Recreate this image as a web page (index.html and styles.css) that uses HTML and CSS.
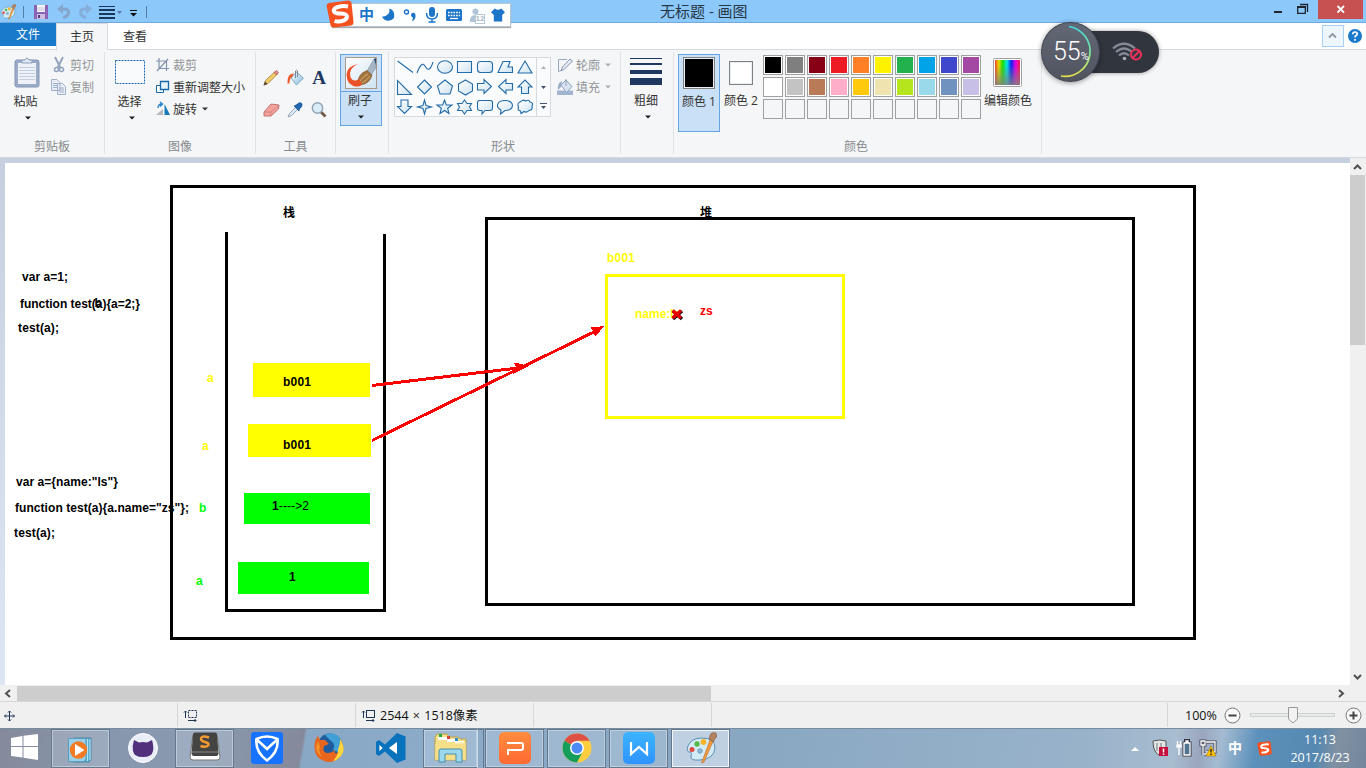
FILE: index.html
```html
<!DOCTYPE html>
<html lang="zh-CN">
<head>
<meta charset="utf-8">
<title>无标题 - 画图</title>
<link rel="stylesheet" href="styles.css">
</head>
<body>
<svg class="defs" width="0" height="0">
  <defs>
    <symbol id="down" viewBox="0 0 6 4"><path d="M0 0.5H6L3 3.5Z" fill="currentColor"/></symbol>
    <symbol id="sogou" viewBox="0 0 28 28">
      <path d="M3 3L22 .5Q25 .5 25.500 3L27.500 22Q27.500 25 25 25.500L8 27.500Q5 27.500 4.500 25L.6 6Q.5 3.500 3 3Z" fill="#f4511e"/>
      <path d="M22 6.500Q17 5.500 12 7Q7 8.500 8 11.500Q9 13.500 14 13.500Q20.500 13.500 21 16.500Q21 20 15 21.200Q11 22 8.500 21" fill="none" stroke="#fff" stroke-width="4"/>
    </symbol>
    <symbol id="palette" viewBox="0 0 32 32">
      <path d="M3 14Q6 6 17 6Q30 6 30 16Q29 27 15 28Q5 29 6 24Q8 20 4 20Q1 19 3 14Z" fill="#d3eaf7" stroke="#5b8fb0"/>
      <circle cx="7" cy="17.500" r="2.500" fill="#e0483e"/><circle cx="12" cy="12" r="2.700" fill="#57b947"/><circle cx="18.500" cy="10" r="2.900" fill="#f5b52a"/><circle cx="15" cy="19" r="2.300" fill="#8fb8d4" stroke="#5b8fb0" stroke-width=".7"/>
      <path d="M25 8L28 9.500L19 30L16.500 31Z" fill="#f39a3b" stroke="#b96b28" stroke-width=".6"/>
      <path d="M24 7L25.500 2Q30 -1 32 2.500Q33 5 29.500 7L28.500 10Z" fill="#b48460" stroke="#7c583d" stroke-width=".6"/>
    </symbol>
    <linearGradient id="ice" x1="0" y1="0" x2="1" y2="1"><stop offset="0" stop-color="#fff"/><stop offset="1" stop-color="#cfe3f2"/></linearGradient>
    <linearGradient id="pour" x1="0" y1="0" x2="1" y2="1"><stop offset="0" stop-color="#fff"/><stop offset="1" stop-color="#7fb9dc"/></linearGradient>
    <linearGradient id="hue"><stop offset="0" stop-color="#f04020"/><stop offset=".15" stop-color="#e8d800"/><stop offset=".3" stop-color="#20e000"/><stop offset=".48" stop-color="#00e8e8"/><stop offset=".65" stop-color="#1020f0"/><stop offset=".83" stop-color="#f000e0"/><stop offset="1" stop-color="#f02040"/></linearGradient>
    <linearGradient id="fade" x1="0" y1="0" x2="0" y2="1"><stop offset=".2" stop-color="#808080" stop-opacity="0"/><stop offset="1" stop-color="#808080" stop-opacity=".85"/></linearGradient>
    <linearGradient id="ring" x1="0" y1="0" x2="0" y2="1"><stop offset="0" stop-color="#45d6e0"/><stop offset=".5" stop-color="#78e8a0"/><stop offset="1" stop-color="#e8e04a"/></linearGradient>
    <linearGradient id="orange-tile" x1="0" y1="0" x2="0" y2="1"><stop offset="0" stop-color="#ff8c3e"/><stop offset="1" stop-color="#ff6a32"/></linearGradient>
    <linearGradient id="blue-tile" x1="0" y1="0" x2="0" y2="1"><stop offset="0" stop-color="#3cb4ff"/><stop offset="1" stop-color="#2f93ff"/></linearGradient>
  </defs>
</svg>

<header class="titlebar">
  <div class="quick">
    <svg class="app-icon" width="16" height="16"><use href="#palette"/></svg>
    <i class="tick"></i>
    <svg class="save" width="14" height="14" viewBox="0 0 14 14"><path d="M0 0H14V14H0Z" fill="#8a63b5"/><path d="M3 0H11V7H3Z" fill="#f5f5fa"/><path d="M3 3H11M3 5H11" stroke="#c9c4d8"/><path d="M3 9H11V14H3Z" fill="#cbbce0"/><path d="M4 10H6V13H4Z" fill="#5b3d86"/></svg>
    <svg class="undo" width="14" height="15" viewBox="0 0 14 15"><path d="M3 5H7.500Q12 5 11.500 9Q11 12.500 6 13.500" fill="none" stroke="#85a5cc" stroke-width="3"/><path d="M6 0V10L0 5Z" fill="#85a5cc"/></svg>
    <svg class="redo" width="14" height="15" viewBox="0 0 14 15"><path d="M11 5H6.500Q2 5 2.500 9Q3 12.500 8 13.500" fill="none" stroke="#85addb" stroke-width="3"/><path d="M8 0V10L14 5Z" fill="#85addb"/></svg>
    <svg class="lines-small" width="24" height="14" viewBox="0 0 24 14"><path d="M0 1H16V2H0ZM0 4H16V6H0ZM0 8H16V10H0ZM0 12H16V14H0Z" fill="#1b365d"/><path d="M18 6H23L20.500 9Z" fill="#5676a5"/></svg>
    <svg class="more" width="7" height="7" viewBox="0 0 7 7"><path d="M0 .5H7" stroke="#111"/><path d="M0 3H7L3.500 6.500Z" fill="#111"/></svg>
    <i class="tick last"></i>
  </div>
  <h1>无标题 - 画图</h1>
  <div class="window-buttons">
    <svg width="32" height="19"><path d="M12 11H20V13H12Z" fill="#1c2530"/></svg>
    <svg class="restore" width="24" height="19"><path d="M3.700 6.700H11.300V13.300H3.700ZM6 4.500H13.500V12" fill="none" stroke="#1c2530" stroke-width="1.300"/><path d="M3 6H12V8H3Z" fill="#1c2530"/></svg>
    <svg class="close" width="45" height="19"><path d="M19.500 6L26 12.500M26 6L19.500 12.500" stroke="#fff" stroke-width="1.800"/></svg>
  </div>
</header>

<nav class="tabs">
  <span class="tab file">文件</span>
  <span class="tab active">主页</span>
  <span class="tab">查看</span>
  <span class="tab-right">
    <svg class="collapse" width="22" height="22"><path d="M7 12.500L10.500 9L14 12.500" fill="none" stroke="#8f969e" stroke-width="1.800"/></svg>
    <svg width="14" height="14" viewBox="0 0 14 14"><circle cx="7" cy="7" r="7" fill="#1979ca"/><path d="M4.800 5.300Q4.800 3 7 3T9.200 5Q9.200 6 7.800 6.800Q7 7.300 7 8.500M7 10V11.800" fill="none" stroke="#fff" stroke-width="1.700"/></svg>
  </span>
</nav>

<section class="ribbon">
  <div class="group g-clip">
    <div class="body">
      <div class="big">
        <svg class="pic" width="26" height="31" viewBox="0 0 26 31"><rect x="1" y="3" width="24" height="27" rx="2" fill="#9aabc8" stroke="#8496b5"/><path d="M4 6H22V27H4Z" fill="#eef2f8"/><path d="M5 10.500H21M5 13.500H21M5 16.500H21M5 19.500H21M5 22.500H21" stroke="#c3cede"/><path d="M8 6V3H11Q13 -1 15 3H18V6Z" fill="#dfe6f1" stroke="#8da0be"/></svg>
        <span>粘贴</span><svg class="arr" width="6" height="4"><use href="#down"/></svg>
      </div>
      <div class="rows muted">
        <div class="row"><svg width="16" height="16" viewBox="0 0 16 16"><path d="M4 0L9.500 11M12 0L6.500 11" stroke="#94a4c0" stroke-width="1.900"/><circle cx="5.500" cy="12.500" r="2" fill="none" stroke="#94a4c0" stroke-width="1.500"/><circle cx="10.500" cy="12.500" r="2" fill="none" stroke="#94a4c0" stroke-width="1.500"/></svg><span>剪切</span></div>
        <div class="row"><svg width="16" height="16" viewBox="0 0 16 16"><path d="M.5 .5H6L9 3.500V11.500H.5ZM6.500 4.500H11.500L14.500 7.500V15.500H6.500Z" fill="#e9eef6" stroke="#a2b1cb"/><path d="M2 4.500H6M2 6.500H6M2 8.500H6M8 9H13M8 11H13M8 13H13" stroke="#a2b1cb"/></svg><span>复制</span></div>
      </div>
    </div>
    <div class="label">剪贴板</div>
  </div>

  <div class="group g-image">
    <div class="body">
      <div class="big">
        <svg class="pic" width="30" height="31"><rect x=".5" y="3.500" width="29" height="23" fill="#f9fafc" stroke="#1769ae" stroke-dasharray="2 1"/></svg>
        <span>选择</span><svg class="arr" width="6" height="4"><use href="#down"/></svg>
      </div>
      <div class="rows">
        <div class="row muted"><svg width="14" height="14" viewBox="0 0 14 14"><path d="M3 0V10.500H13M0 3H10.500V13M1 13L12 1" fill="none" stroke="#8393ad" stroke-width="1.200"/></svg><span>裁剪</span></div>
        <div class="row"><svg width="14" height="14" viewBox="0 0 14 14"><path d="M.5 5.500H7.500V12.500H.5Z" fill="#fff" stroke="#1769ae"/><path d="M4.500 1.500H12.500V9.500H4.500Z" fill="#e7f1fa" stroke="#1769ae" stroke-width="1.300"/></svg><span>重新调整大小</span></div>
        <div class="row"><svg width="14" height="14" viewBox="0 0 14 14"><path d="M0 13H7V7Z" fill="#b4b8bd"/><path d="M8.500 13V2L14 13Z" fill="#197aba"/><path d="M2 6Q2 2 6 2M4 0L6.500 2L4 4.500" fill="none" stroke="#2482d0" stroke-width="1.300"/></svg><span>旋转</span><svg class="arr-inline" width="6" height="4"><use href="#down"/></svg></div>
      </div>
    </div>
    <div class="label">图像</div>
  </div>

  <div class="group g-tools">
    <div class="body tools">
      <svg width="16" height="16" viewBox="0 0 16 16"><path d="M1 15L2.500 10.500L11.500 2L14 4.500L5 13.500Z" fill="#f1cb68" stroke="#a07a3e" stroke-width=".8"/><path d="M11 2.500L13.500 .5L15.500 2.500L13.500 5Z" fill="#e58686" stroke="#a65a52" stroke-width=".7"/><path d="M.5 15.500L2 11.500L4.500 14Z" fill="#514638"/></svg>
      <svg width="17" height="16" viewBox="0 0 17 16"><path d="M4 8L9.500 2L16.500 8L9.500 15Z" fill="url(#pour)" stroke="#6d9abb" stroke-width=".8"/><path d="M8.500 8V1Q9.500 -.5 10.500 1V7" stroke="#6c7a88" stroke-width=".9" fill="none"/><path d="M7 3.500Q0 3 .5 13.500H2.500Q2.500 8 5 7Z" fill="#ed5b2c"/></svg>
      <span class="letter">A</span>
      <svg width="17" height="14" viewBox="0 0 17 14"><path d="M1 9L8 1L16 2L15.500 6L8 13H1Z" fill="#f2a39d" stroke="#bd6963" stroke-width=".9"/><path d="M1 9H8L16 2M8 9V13" fill="none" stroke="#cf7b75" stroke-width=".8"/></svg>
      <svg width="16" height="16" viewBox="0 0 16 16"><path d="M1 15L2.500 11.500L9 5L11 7L4.500 13.500Z" fill="#d8e9f7" stroke="#8294a8" stroke-width=".8"/><path d="M7 4L9 3L12 .8Q15 0 15.200 3Q15 5 12.500 7L12 9Z" fill="#1d65ae" stroke="#174d84" stroke-width=".6"/></svg>
      <svg width="16" height="16" viewBox="0 0 16 16"><path d="M9.500 9.500L14.500 14.500" stroke="#725846" stroke-width="2.800"/><circle cx="6.500" cy="6" r="5.200" fill="#d9edf9" stroke="#91a3b3" stroke-width="1.400"/></svg>
    </div>
    <div class="label">工具</div>
  </div>

  <div class="group g-brush">
    <div class="brush-btn">
      <div class="brush-top"><svg width="32" height="32" viewBox="0 0 32 32"><rect x=".5" y=".5" width="31" height="31" fill="url(#ice)" stroke="#a99b8c"/><path d="M13 7Q2 9 1.500 18Q2 29 12 29.500Q16 30 17 26L14 22Q8 26 5.500 20Q3 11 13 7Z" fill="#ed5129"/><path d="M22 14L29 2H31V11L26 18Z" fill="#a8b5c4" stroke="#6f7f91" stroke-width=".5"/><path d="M29 2L31 1V8Z" fill="#304b70"/><path d="M13 25Q13 17 22 13.500L27 18Q25 27 15 28Z" fill="#a4743e" stroke="#74502e" stroke-width=".6"/><path d="M15 24Q18 19 23 17M17 26Q22 23 25 19" stroke="#d9ae72" fill="none"/><path d="M9 29L14 22L17 27Q14 30 9 29Z" fill="#ed5129"/></svg></div>
      <span>刷子</span><svg class="arr" width="6" height="4"><use href="#down"/></svg>
    </div>
  </div>

  <div class="group g-shapes">
    <div class="body">
      <svg class="gallery" width="157" height="60" viewBox="0 0 157 60">
        <path d="M.5 .5H156.500V59.500H.5ZM142.500 .5V59.500" fill="#fafbfc" stroke="#d6d9dd"/>
        <g fill="url(#ice)" stroke="#236ca8" stroke-width="1.100">
          <path d="M3.500 4L19 15.500"/>
          <path d="M23 16C26 8 29 5 31 9S36 15 39 5" fill="none"/>
          <ellipse cx="51" cy="10" rx="7.500" ry="6.200"/>
          <path d="M63.500 4.500H77.500V15.500H63.500Z"/>
          <rect x="83.500" y="4.500" width="15" height="11" rx="3"/>
          <path d="M104 15.500L109 4.500H116L114 10H118.500V15.500Z"/>
          <path d="M131 4L138 16H124Z"/>
          <path d="M3.500 23.500V37.500H17.500Z"/>
          <path d="M30.500 23L37.500 30L30.500 37L23.500 30Z"/>
          <path d="M51 23L58.500 29L56 37H46L43.500 29Z"/>
          <path d="M71.500 23L78.500 27V34L71.500 38L64.500 34V27Z"/>
          <path d="M83.500 26.500H90V22.500L97.500 29.500L90 36.500V33H83.500Z"/>
          <path d="M118.500 26.500H112V22.500L104.500 29.500L112 36.500V33H118.500Z"/>
          <path d="M127.500 36.500V30H124L131 23L138 30H134.500V36.500Z"/>
          <path d="M7 43V49.500H3.500L10.500 56.500L17.500 49.500H14V43Z"/>
          <path d="M30.500 43L32 48.500L37.500 50L32 51.500L30.500 57L29 51.500L23.500 50L29 48.500Z"/>
          <path d="M50.500 43L52.300 48H58L53.700 51.300L55 56.500L50.500 53.500L46 56.500L47.300 51.300L43 48H48.700Z"/>
          <path d="M70.500 43L73 46.500H77.500L75.500 50L77.500 53.500H73L70.500 57L68 53.500H63.500L65.500 50L63.500 46.500H68Z"/>
          <path d="M85.500 43.500H96.500Q98.500 43.500 98.500 46V51Q98.500 53.500 96 53.500H91L88 57V53.500H85.500Q83.500 53.500 83.500 51V46Q83.500 43.500 85.500 43.500Z"/>
          <path d="M107 53C101 50 103 43.500 111 43.500C121 43.500 121 53.500 111 53.500L106.500 57Z"/>
          <path d="M127 44.500Q129 42 131.500 44Q135 42 136 45Q140 46 138 49Q139 53 135 53.500Q133 56 130 54.500L127 56.500L126.500 54Q123 53.500 124.500 50Q122.500 46 127 44.500Z"/>
        </g>
        <path d="M147 12L149.500 9L152 12Z" fill="#a9afb8"/><path d="M147 29H152L149.500 32ZM147 49H152L149.500 52Z" fill="#42536b"/><path d="M146 46.500H153" stroke="#42536b"/>
      </svg>
      <div class="rows muted">
        <div class="row"><svg width="16" height="16" viewBox="0 0 16 16"><path d="M10 2.500H1.500V14.500L5 13" fill="none" stroke="#98a7bf"/><path d="M4 14L5.500 10L13 2L15.500 4L7.500 12Z" fill="#e6edf6" stroke="#8496b2"/></svg><span>轮廓</span><svg class="arr-inline" width="6" height="4"><use href="#down"/></svg></div>
        <div class="row"><svg width="16" height="16" viewBox="0 0 16 16"><path d="M0 11.500H16V16H0Z" fill="#a2b4cf"/><path d="M4 6L9 1L15 7.500L9.500 13.500Z" fill="#d9e3f0" stroke="#8fa2c0"/><path d="M9 0V7" stroke="#8fa2c0"/><path d="M5 2Q0 4 1 11L4 8Z" fill="#9daec9"/></svg><span>填充</span><svg class="arr-inline" width="6" height="4"><use href="#down"/></svg></div>
      </div>
    </div>
    <div class="label">形状</div>
  </div>

  <div class="group g-size">
    <div class="big">
      <svg class="pic" width="32" height="31"><path d="M0 2H32V3H0ZM0 7H32V9H0ZM0 14H32V18H0ZM0 22H32V29H0Z" fill="#1f3860"/></svg>
      <span>粗细</span><svg class="arr" width="6" height="4"><use href="#down"/></svg>
    </div>
  </div>

  <div class="group g-colors">
    <div class="body">
      <div class="color-btn on"><i class="chip black"></i><span>颜色 1</span></div>
      <div class="color-btn"><i class="chip white small"></i><span>颜色 2</span></div>
      <div class="palette">
        <i class="black"></i><i class="gray"></i><i class="maroon"></i><i class="red"></i><i class="orange"></i><i class="yellow"></i><i class="green"></i><i class="azure"></i><i class="indigo"></i><i class="purple"></i>
        <i class="white"></i><i class="silver"></i><i class="brown"></i><i class="pink"></i><i class="gold"></i><i class="cream"></i><i class="lime"></i><i class="sky"></i><i class="steel"></i><i class="lavender"></i>
        <i></i><i></i><i></i><i></i><i></i><i></i><i></i><i></i><i></i><i></i>
      </div>
      <div class="edit"><svg width="29" height="29" viewBox="0 0 29 29"><rect x=".5" y=".5" width="28" height="28" rx="1" fill="#fff" stroke="#a0a0a0"/><path d="M2 2H27V27H2Z" fill="url(#hue)"/><path d="M2 2H27V27H2Z" fill="url(#fade)"/></svg><span>编辑颜色</span></div>
    </div>
    <div class="label">颜色</div>
  </div>
</section>

<main class="workspace">
  <svg class="canvas" width="1345" height="522" viewBox="5 163 1345 522">
    <g fill="none" stroke="#000" stroke-width="3" shape-rendering="crispEdges">
      <rect x="171.500" y="186.500" width="1023" height="452"/>
      <rect x="486.500" y="218.500" width="647" height="386"/>
      <path d="M226.500 232V610.500H384.500V234"/>
      <rect x="606.500" y="275.500" width="237" height="142" stroke="#ff0"/>
    </g>
    <g shape-rendering="crispEdges">
      <path d="M253 363H370V397H253ZM248 424H371V457H248Z" fill="#ff0"/>
      <path d="M244 493H370V524H244ZM238 562H369V594H238Z" fill="#0f0"/>
    </g>
    <g fill="#f00" stroke="#f00" shape-rendering="crispEdges">
      <path d="M372 385.500L518 368M372 440.500L596 331" stroke-width="3"/>
      <path d="M527 366L515 363.500L517 368L515 372ZM602.500 327L592 328L594 331L595.500 335Z" stroke-width="1.500"/>
    </g>
    <g class="ink">
      <text x="22" y="281" textLength="46">var a=1;</text>
      <text x="20" y="308" textLength="120">function test(a){a=2;}</text>
      <text x="94.500" y="307">b</text>
      <text x="18" y="332" textLength="41">test(a);</text>
      <text x="16" y="486" textLength="102">var a={name:"ls"}</text>
      <text x="15" y="512" textLength="174">function test(a){a.name="zs"};</text>
      <text x="14" y="537" textLength="41">test(a);</text>
      <text x="283" y="386" textLength="28">b001</text>
      <text x="283" y="449" textLength="28">b001</text>
      <text x="272" y="510" textLength="37">1<tspan class="plain">----&gt;2</tspan></text>
      <text x="289" y="581">1</text>
      <text class="cjk" x="283" y="217">栈</text>
      <text class="cjk" x="700" y="217">堆</text>
      <g fill="#ff0"><text x="207" y="382">a</text><text x="202" y="450">a</text><text x="607" y="262" textLength="28">b001</text><text x="635" y="318">name:ls</text></g>
      <g fill="#0f0"><text x="199" y="512">b</text><text x="196" y="585">a</text></g>
      <text x="700" y="315" fill="#f00">zs</text>
    </g>
    <path d="M673 311L682 319M682 311L673 319" stroke="#101820" stroke-width="3.500"/>
    <path d="M672.500 310.500L681 318M681 310.500L672.500 318" stroke="#e80000" stroke-width="3.200"/>
  </svg>
  <div class="vscroll">
    <svg width="15" height="17"><path d="M4 11L7.500 7.500L11 11" fill="none" stroke="#505050" stroke-width="2"/></svg>
    <i class="thumb"></i>
    <svg class="bottom" width="15" height="17"><path d="M4 7L7.500 10.500L11 7" fill="none" stroke="#505050" stroke-width="2"/></svg>
  </div>
</main>
<div class="hscroll">
  <svg width="17" height="15"><path d="M10 4L6 7.500L10 11" fill="none" stroke="#505050" stroke-width="2"/></svg>
  <i class="thumb"></i>
  <svg class="end" width="17" height="15"><path d="M7 4L11 7.500L7 11" fill="none" stroke="#505050" stroke-width="2"/></svg>
</div>

<footer class="status">
  <div class="cell first"><svg width="12" height="12" viewBox="0 0 12 12"><path d="M6.500 1V11M1.500 6H11.500M5 2.500L6.500 1L8 2.500M5 9.500L6.500 11L8 9.500M3 4.500L1.500 6L3 7.500M10 4.500L11.500 6L10 7.500" fill="none" stroke="#1f3554"/></svg></div>
  <div class="cell"><svg width="14" height="12" viewBox="0 0 14 12"><path d="M1.500 8V1M0 2.500L1.500 1L3 2.500M4 10.500H12M10.500 9L12 10.500L10.500 12" fill="none" stroke="#1f3554"/><rect x="4.500" y=".5" width="8" height="7" fill="none" stroke="#1f3554" stroke-dasharray="2 1"/></svg></div>
  <div class="cell"><svg width="14" height="12" viewBox="0 0 14 12"><path d="M1.500 8V1M0 2.500L1.500 1L3 2.500M4 10.500H12M10.500 9L12 10.500L10.500 12" fill="none" stroke="#1f3554"/><rect x="4.500" y=".5" width="8" height="7" fill="none" stroke="#1f3554"/></svg><span class="dims">2544 × 1518像素</span></div>
  <div class="cell"></div>
  <div class="cell wide"></div>
  <div class="zoom">
    <span>100%</span>
    <svg width="17" height="17" viewBox="0 0 17 17"><circle cx="8.500" cy="8.500" r="7.500" fill="#f8f8f8" stroke="#777"/><path d="M4.500 8.500H12.500" stroke="#444" stroke-width="2"/></svg>
    <svg class="slider" width="85" height="17" viewBox="0 0 85 17"><rect x=".5" y="6.500" width="84" height="3" fill="#e7eaea" stroke="#ced2d2"/><path d="M38.500 .5H47.500V12L43 16L38.500 12Z" fill="#f2f2f2" stroke="#999"/></svg>
    <svg width="17" height="17" viewBox="0 0 17 17"><circle cx="8.500" cy="8.500" r="7.500" fill="#f8f8f8" stroke="#777"/><path d="M4.500 8.500H12.500M8.500 4.500V12.500" stroke="#444" stroke-width="2"/></svg>
  </div>
</footer>

<div class="taskbar">
  <div class="start"><svg width="28" height="26" viewBox="0 0 28 26"><path d="M0 4L11.500 2V12H0ZM12.500 1.800L27 0V12H12.500ZM0 13H11.500V23.500L0 22ZM12.500 13H27V26L12.500 23.800Z" fill="#fff"/></svg></div>
  <div class="task open"><svg class="media" width="28" height="26" viewBox="0 0 28 26"><path d="M7 1H24V22L22 25H6Z" fill="#5baed1" stroke="#377e9f" stroke-width=".8"/><path d="M1.500 1.500H19V22L17 24.500H1.500Z" fill="#9bd0e8" stroke="#559cbd"/><path d="M20.500 2V24M23 2V23" stroke="#b9e4f5"/><circle cx="11.500" cy="13" r="8.700" fill="#f17a22"/><path d="M8 7L17.500 13L8 19Z" fill="#fff"/></svg></div>
  <div class="task"><svg width="30" height="30" viewBox="0 0 30 30"><circle cx="15" cy="15" r="14.500" fill="#e9edf8" stroke="#fff"/><path d="M6 7L11 9.500Q15 8.500 19 9.500L24 7Q26 14 25 18Q24 24 15 24Q6 24 5 18Q4 13 6 7Z" fill="#52307c"/></svg></div>
  <div class="task open"><svg class="raised" width="32" height="30" viewBox="0 0 32 30"><path d="M4 3L1 25Q1 28 4 28H28Q31 28 31 25L28 3Z" fill="#fff" stroke="#777"/><path d="M6 .5H26Q28 .5 28 2.500L29.500 21Q29.500 24 27 24H5Q2.500 24 2.500 21L4 2.500Q4 .5 6 .5Z" fill="#444442"/><path d="M3 20H29" stroke="#888"/><path d="M20 5.500Q12 3 12 7Q12 9 16 10Q20 11 19.500 13Q18 16 11.500 14" fill="none" stroke="#f39b32" stroke-width="2.500"/></svg></div>
  <div class="task"><svg width="32" height="32" viewBox="0 0 32 32"><rect width="32" height="32" rx="3" fill="#1672ff"/><path d="M5.500 7Q16 2 26.500 7Q28 20 16 28.500Q4 20 5.500 7ZM6 8Q11 12 16 17Q21 12 26 8" fill="none" stroke="#fff" stroke-width="2.600"/></svg></div>
  <div class="task"><svg width="32" height="32" viewBox="0 0 32 32"><circle cx="17" cy="14" r="12.500" fill="#1e5c9e"/><path d="M12 3Q20 -1 27 6Q32 15 27 21L20 18Q23 12 18 9Z" fill="#3f9fd6"/><path d="M27 7Q34 18 26 26Q19 32 11 29Q2 26 1.500 16Q1 8 5 4L7 8L12 8L16 12L11 14Q9 20 14 21Q19 21 22 18Q21 23 24 21Q28 17 27 7Z" fill="#e8651d"/><path d="M27 7Q34 18 27 25Q24 28 20 29Q26 22 25 17Q27 14 27 7Z" fill="#ffd63c"/><path d="M5 9Q0 19 9 25Q5 19 7 14Z" fill="#f39227"/></svg></div>
  <div class="task"><svg width="30" height="30" viewBox="0 0 30 30"><path d="M21 0L29.500 3.500V26.500L21 30L9 18.500L3 23L0 21V9L3 7L9 11.500ZM21 9L13 15L21 21ZM3.500 12V18L6.500 15Z" fill="#0873bd" fill-rule="evenodd"/><path d="M21 9L13 15L21 21ZM3.500 12V18L6.500 15Z" fill="#fff"/></svg></div>
  <div class="task stacked"><svg width="34" height="30" viewBox="0 0 34 30"><path d="M3 1H13L15 4H24L26 6H32V27H1V4Z" fill="#f3df87" stroke="#b99f4a"/><path d="M4 4H13V7H4ZM13 6H22V9H13ZM21 8H30V11H21Z" fill="#fff"/><path d="M5 1H8V4H5Z" fill="#22a944"/><path d="M13 3H16V6H13Z" fill="#d44434"/><path d="M21 5H24V8H21Z" fill="#2e8bd0"/><path d="M1 11L32 9V27H1Z" fill="#f6e089" opacity=".75"/><path d="M5 18Q5 16 7 16H26Q28 16 28 18V29H22V21H11V29H5Z" fill="#9bd8ed" stroke="#478eac"/></svg></div>
  <div class="task open"><svg width="32" height="32" viewBox="0 0 32 32"><rect width="32" height="32" rx="5" fill="url(#orange-tile)"/><path d="M8 11H22Q24 11 24 13V16Q24 18 22 18H9V23" fill="none" stroke="#fff" stroke-width="2"/></svg></div>
  <div class="task open"><svg width="30" height="30" viewBox="0 0 30 30"><circle cx="15" cy="15" r="14.500" fill="#ffcd40"/><path d="M15 15L2.400 7.800A14.500 14.500 0 0 1 27.600 7.800H15Z" fill="#dd5144"/><path d="M15 15L2.400 7.800A14.500 14.500 0 0 0 15 29.500L21 18Z" fill="#159d5b"/><circle cx="15" cy="15" r="7" fill="#fff"/><circle cx="15" cy="15" r="5.500" fill="#4c8bf5"/></svg></div>
  <div class="task open"><svg width="32" height="32" viewBox="0 0 32 32"><rect width="32" height="32" rx="5" fill="url(#blue-tile)"/><path d="M8 10V22L16 15L24 22V10" fill="none" stroke="#fff" stroke-width="2.200"/></svg></div>
  <div class="task open current"><svg width="32" height="32"><use href="#palette"/></svg></div>
  <div class="tray">
    <svg width="8" height="4" viewBox="0 0 8 4"><path d="M0 4L4 0L8 4Z" fill="#fff"/></svg>
    <svg width="16" height="17" viewBox="0 0 16 17"><path d="M1 1Q8 -1 14 1V8Q12 14 7 15Q1 12 1 1Z" fill="#e2e4e5" stroke="#555"/><path d="M5 3V11M9 3V8" stroke="#777"/><rect x="7" y="7" width="9" height="9" fill="#c40f3c"/><path d="M11.500 8.500V12.500M11.500 13.500V15" stroke="#fff" stroke-width="1.500"/></svg>
    <svg width="16" height="17" viewBox="0 0 16 17"><path d="M8 3H14V15H8ZM9.500 .5H12.500V2.500H9.500Z" fill="none" stroke="#334" stroke-width="3"/><path d="M8 3H14V15H8ZM10 1H12V2H10Z" fill="#51748f" stroke="#fff" stroke-width="1.300"/><path d="M1.500 1V4M4.500 1V4M1 5H5V7H1ZM3 8V15" fill="#fff" stroke="#fff" stroke-width="1.300"/></svg>
    <svg width="16" height="17" viewBox="0 0 16 17"><path d="M6 2H15V12H6M4 14H9M1 1H5V5H1ZM3 5V15" fill="none" stroke="#445" stroke-width="3"/><path d="M6 2H15V12H6M4 14H9M1 1H5V5H1ZM3 5V15" fill="none" stroke="#fff" stroke-width="1.300"/><path d="M11 6L16 16H6Z" fill="#ffc300" stroke="#946c00" stroke-width=".5"/><path d="M11 9V12.500M11 13.500V15" stroke="#222" stroke-width="1.400"/></svg>
    <span class="ime">中</span>
    <svg width="15" height="15"><use href="#sogou"/></svg>
    <div class="clock"><span>11:13</span><span>2017/8/23</span></div>
  </div>
</div>

<div class="sogou-bar">
  <svg class="sogou-logo" width="28" height="28"><use href="#sogou"/></svg>
  <span class="cn">中</span>
  <svg width="14" height="14" viewBox="0 0 15 14"><path d="M8 0Q9 8 0 9Q3 14 8 13Q14 12 13 6Q12 1 8 0Z" fill="#1c75c9"/></svg>
  <svg width="14" height="14" viewBox="0 0 14 14"><circle cx="3.500" cy="4" r="2" fill="none" stroke="#1c75c9" stroke-width="1.400"/><path d="M9 5Q12 4 12.500 7Q13 11 9.500 13L9 12Q11 10 9 9Q7 7 9 5Z" fill="#1c75c9"/></svg>
  <svg width="14" height="16" viewBox="0 0 14 16"><rect x="4" y="0" width="6" height="10" rx="3" fill="#1c75c9"/><path d="M1.500 6Q1.500 12 7 12T12.500 6M7 12V15M3.500 15H10.500" fill="none" stroke="#1c75c9" stroke-width="1.500"/></svg>
  <svg width="16" height="12" viewBox="0 0 16 12"><rect width="16" height="12" rx="1.500" fill="#1c75c9"/><path d="M2 3.500H14M2 6.500H14" stroke="#fff" stroke-width="1.500" stroke-dasharray="1.700 1"/><path d="M4 9.500H12" stroke="#fff" stroke-width="1.300"/></svg>
  <span class="person"><svg width="11" height="15" viewBox="0 0 11 15"><circle cx="5.500" cy="3.500" r="3" fill="#b1c3d6"/><path d="M0 14Q-.5 7 5.500 7T11 14Z" fill="#b1c3d6"/></svg><b>12</b></span>
  <svg width="14" height="14" viewBox="0 0 15 14"><path d="M4 0Q7.500 3 11 0L15 4L12 7V14H3V7L0 4Z" fill="#1c75c9"/></svg>
</div>

<div class="meter">
  <div class="pill"><svg width="32" height="20" viewBox="0 0 32 20"><path d="M1 6.500Q12 -3 23 6.500M4 10Q12 3 20 10M7 13.500Q12 9 17 13.500" fill="none" stroke="#858a96" stroke-width="2.300"/><circle cx="12.500" cy="16.500" r="1.800" fill="#a9adb6"/><circle cx="24" cy="12.500" r="5" fill="#343842" stroke="#ec3157" stroke-width="2"/><path d="M20.500 16L27.500 9" stroke="#ec3157" stroke-width="2"/></svg></div>
  <div class="dial"><svg width="59" height="59" viewBox="0 0 59 59"><path d="M30 4.500A25 25 0 1 1 22 54" fill="none" stroke="url(#ring)" stroke-width="1.700"/></svg><span>55<small>%</small></span></div>
</div>
</body>
</html>
```

FILE: styles.css
```css
* { box-sizing: border-box; }
body { margin: 0; width: 1366px; height: 768px; overflow: hidden; display: flex; flex-direction: column; position: relative; background: #fff; color: #333; font: 12px/16px "Open Sans", "Noto Sans CJK SC", sans-serif; }
svg { display: block; flex: none; overflow: visible; }
span { white-space: nowrap; }
.defs { position: absolute; }

.titlebar { height: 23px; flex: none; display: flex; background: #8cc8fa; border-bottom: 1px solid #70a9df; }
.quick { display: flex; align-items: center; width: 200px; height: 22px; padding-top: 1px; }
.tick { width: 1px; height: 12px; background: #527da6; margin-left: 7px; }
.tick.last { margin-left: 3px; }
.save { margin-left: 10px; }
.undo { margin-left: 9px; }
.redo { margin-left: 7px; }
.lines-small { margin-left: 7px; }
.more { margin: 3px 6px 0 7px; }
h1 { margin: 0 0 0 353px; font: 15px/22px "Open Sans", "Noto Sans CJK SC", sans-serif; color: #263746; padding-left: 107px; }
.window-buttons { display: flex; width: 104px; margin-right: 3px; margin-left: auto; padding-left: 3px; }
.restore { margin-right: -3px; }
.close { background: #c75050; margin-left: auto; }

.tabs { height: 27px; flex: none; display: flex; border-bottom: 1px solid #d7dade; }
.tab { width: 52px; text-align: center; line-height: 27px; height: 27px; }
.tab.file { width: 56px; height: 23px; line-height: 24px; background: #1979ca; color: #fff; }
.tab.active { background: #f5f6f7; border: 1px solid #d7dade; border-bottom: 0; line-height: 26px; }
.tab:nth-child(3) { width: 54px; }
.tab-right { margin-left: auto; display: flex; align-items: center; gap: 4px; padding-right: 4px; }
.collapse { background: #edf5fd; outline: 1px solid #a9d0f5; outline-offset: -1px; }

.ribbon { height: 108px; flex: none; display: flex; background: #f5f6f7; border-bottom: 1px solid #d5d9df; padding-top: 2px; }
.group { height: 102px; flex: none; border-right: 1px solid #e0e2e4; display: flex; flex-direction: column; }
.body { height: 85px; flex: none; display: flex; }
.label { text-align: center; line-height: 20px; color: #868a8e; }
.g-clip { width: 105px; }
.g-image { width: 151px; }
.g-tools { width: 80px; }
.g-brush { width: 53px; padding: 2px 0 0 4px; }
.g-shapes { width: 232px; }
.g-shapes .label, .g-colors .label { padding-right: 3px; }
.g-size { width: 53px; }
.g-colors { width: 368px; }
.big { display: flex; flex-direction: column; align-items: center; padding-top: 5px; flex: none; }
.big .pic { margin-bottom: 6px; }
.arr { margin-top: 6px; color: #1e1e1e; }
.big .arr { margin-left: 4px; }
.g-clip .big { width: 51px; }
.g-clip .pic { margin-left: 3px; }
.g-image .pic { margin-left: 1px; }
.g-image .big { width: 49px; margin-right: 2px; }
.rows { padding-top: 2px; }
.row { height: 22px; display: flex; align-items: center; gap: 3px; }
.row span { padding-top: 1px; }
.muted { color: #929598; }
.arr-inline { margin-left: 2px; }
.muted .arr-inline { color: #a8adb3; }
.tools { display: grid; grid-template-columns: 24px 24px 24px; grid-template-rows: 32px 32px; padding: 10px 0 0 3px; justify-items: center; align-items: center; align-content: start; }
.letter { font: bold 19px/20px "Liberation Serif", serif; color: #1f3860; }
.brush-btn { width: 42px; height: 72px; border: 1px solid #65a5e5; background: #c9e0f7; display: flex; flex-direction: column; align-items: center; }
.brush-top { width: 100%; height: 37px; padding: 2px 4px; border-bottom: 1px solid #65a5e5; }
.brush-btn > span { margin: 1px 2px 0 0; }
.gallery { margin: 5px 6px 0 5px; }
.g-size .big { padding: 4px 2px 0 0; }

.color-btn { width: 42px; display: flex; flex-direction: column; align-items: center; flex: none; }
.color-btn.on { margin: 2px 0 0 4px; height: 78px; background: #c9e0f7; border: 1px solid #65a5e5; padding-top: 2px; }
.color-btn.on span { margin-top: 5px; }
.color-btn:not(.on) { padding-top: 9px; }
.color-btn:not(.on) span { margin-top: 8px; }
.chip { width: 32px; height: 32px; border: 1px solid #808080; box-shadow: inset 0 0 0 1px #e8eef5; }
.chip.small { width: 24px; height: 24px; }
.palette { display: grid; grid-template-columns: repeat(10, 20px); grid-auto-rows: 20px; gap: 2px; margin: 3px 3px 0 1px; align-content: start; }
.palette i { border: 1px solid #a0a0a0; }
.palette i:nth-child(-n+20) { box-shadow: inset 0 0 0 1px #fff; }
.edit { display: flex; flex-direction: column; align-items: center; padding-top: 6px; }
.edit svg { margin-right: 2px; }
.edit span { margin-top: 6px; }
.black { background: #000; } .gray { background: #7f7f7f; } .maroon { background: #880015; } .red { background: #ed1c24; } .orange { background: #ff7f27; }
.yellow { background: #fff200; } .green { background: #22b14c; } .azure { background: #00a2e8; } .indigo { background: #3f48cc; } .purple { background: #a349a4; }
.white { background: #fff; } .silver { background: #c3c3c3; } .brown { background: #b97a57; } .pink { background: #ffaec9; } .gold { background: #ffc90e; }
.cream { background: #efe4b0; } .lime { background: #b5e61d; } .sky { background: #99d9ea; } .steel { background: #7092be; } .lavender { background: #c8bfe7; }

.workspace { height: 527px; flex: none; display: flex; background: linear-gradient(#c5cfdf, #dce6f4); padding: 5px 0 0 5px; }
.canvas { background: #fff; overflow: hidden; }
.vscroll { width: 16px; margin-top: -5px; background: #f0f0f0; display: flex; flex-direction: column; }
.vscroll .thumb { width: 15px; height: 170px; background: #cdcdcd; }
.vscroll .bottom { margin-top: auto; }
.ink { font: bold 12px "Liberation Sans", Arial, sans-serif; }
.plain { font-weight: normal; }
.cjk { font: bold 12px "Noto Sans CJK SC", sans-serif; }
.hscroll { height: 16px; flex: none; padding-top: 1px; background: #f0f0f0; display: flex; }
.hscroll .thumb { width: 694px; background: #cdcdcd; }
.hscroll .end { margin: 0 17px 0 auto; }

.status { height: 27px; flex: none; display: flex; background: #f0f0f0; border-top: 1px solid #d7d7d7; padding: 1px 0; color: #111; }
.cell { width: 178px; display: flex; align-items: center; padding: 1px 0 0 6px; gap: 4px; border-right: 1px solid #d7d7d7; }
.cell.first { padding-left: 3px; }
.cell.wide { width: 456px; }
.dims { font-size: 12.5px; word-spacing: 1px; padding-top: 1px; }
.zoom { display: flex; align-items: center; padding: 1px 0 0 17px; }
.zoom span { width: 39px; font-size: 12.5px; padding-top: 1px; }
.slider { margin: 0 10px 0 9px; }

.taskbar { height: 40px; flex: none; display: flex; color: #fff; background: linear-gradient(100deg, #858a9b 0, #8797ad 110px, #8999b0 210px, #85899b 300px, #89a8c5 303px, #8cabc9 430px, #88a6c1 700px, #98b2ca 1070px, #a8bdcf 1160px, #9aa6bd 1185px, #a4bbd1 1205px, #5c91bb 1240px, #5688b1 1300px, #7f91a2 1320px, #6f8199 1366px); border-top: 1px solid #788c9f; }
.start { width: 49px; padding: 5px 0 0 11px; }
.task { width: 59px; height: 39px; margin: 0 1px 0 2px; padding-bottom: 2px; display: flex; align-items: center; justify-content: center; border: 1px solid transparent; }
.open, .stacked { background: rgba(220,231,242,.25); border-color: #66798c; box-shadow: inset 0 0 0 1px rgba(220,232,243,.5); }
.stacked { width: 55px; margin: 0 5px 0 2px; position: relative; }
.stacked::after { content: ""; position: absolute; left: 53px; top: -1px; width: 5px; height: 39px; border: 1px solid #66798c; border-left: 1px solid #ccd9e6; }
.current { background: rgba(220,231,242,.65); box-shadow: inset 0 0 0 1px #eff5fa; }
.media { margin-top: 5px; }
.raised { margin-top: -2px; }
.tray { margin-left: auto; display: flex; align-items: center; gap: 8px; padding-right: 16px; font-size: 12.5px; }
.tray > svg:first-child { margin-right: 5px; }
.ime { font: bold 14px/20px "Noto Sans CJK SC", sans-serif; margin: -3px 7px 0 4px; }
.clock { width: 60px; margin-left: 10px; display: flex; flex-direction: column; align-items: center; line-height: 18px; padding-top: 1px; }

.sogou-bar { position: absolute; left: 332px; top: 3px; width: 179px; height: 24px; background: #fdfefe; border: 1px solid #b5c6d5; box-shadow: 0 1px 1px #aaa; display: flex; align-items: center; gap: 7.5px; padding-left: 26px; }
.sogou-logo { position: absolute; left: -7px; top: -4px; }
.cn { font: bold 15px/20px "Noto Sans CJK SC", sans-serif; color: #1c75c9; margin-top: -2px; }
.person { display: flex; width: 16px; margin-right: -2px; color: #a8b8c9; align-items: flex-end; }
.person b { font: bold 8px/8px "Liberation Sans", sans-serif; background: #fff; margin-left: -5px; outline: 1px solid #b9c8d6; }

.meter { position: absolute; left: 1041px; top: 22px; width: 118px; height: 60px; }
.pill { position: absolute; left: 30px; top: 9px; width: 88px; height: 42px; border-radius: 21px; background: #31353e; box-shadow: 0 0 4px rgba(0,0,0,.4); padding: 11px 0 0 41px; }
.dial { position: absolute; left: 0; top: 0; width: 59px; height: 60px; border-radius: 50%; background: linear-gradient(#626875, #50545f); border: 1px solid #414550; box-shadow: 0 1px 5px rgba(0,0,0,.4); color: #fff; }
.dial svg { position: absolute; left: -3px; top: -1px; }
.dial span { position: absolute; left: 11px; top: 13px; font: 300 25px/32px Roboto, sans-serif; }
.dial small { font-size: 11px; font-weight: 400; }
```
